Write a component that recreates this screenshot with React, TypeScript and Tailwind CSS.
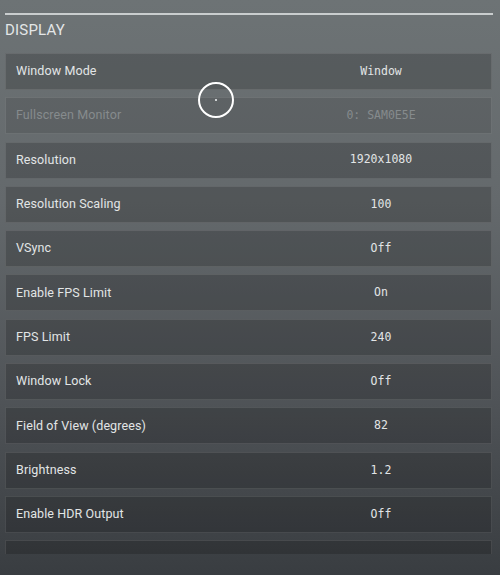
const rows = [
  { label: "Window Mode", value: "Window" },
  { label: "Fullscreen Monitor", value: "0: SAM0E5E", disabled: true },
  { label: "Resolution", value: "1920x1080" },
  { label: "Resolution Scaling", value: "100" },
  { label: "VSync", value: "Off" },
  { label: "Enable FPS Limit", value: "On" },
  { label: "FPS Limit", value: "240" },
  { label: "Window Lock", value: "Off" },
  { label: "Field of View (degrees)", value: "82" },
  { label: "Brightness", value: "1.2" },
  { label: "Enable HDR Output", value: "Off" },
];

export default function App() {
  return (
    <div className="relative w-[500px] h-[575px] overflow-hidden bg-[linear-gradient(180deg,#6d7375_0%,#64696c_35%,#4f5357_70%,#393d41_100%)] font-['Roboto',sans-serif]">
      <div className="pl-[5px] pr-[7px] pt-[13px]">
        <div className="h-[2px] bg-[#c9cdce]" />
        <h2 className="mt-[6px] text-[15px] leading-[18px] tracking-[0.2px] text-[#e3e6e7] uppercase">
          Display
        </h2>
        <div className="mt-[14px] h-[501px] overflow-hidden flex flex-col gap-[7.3px] pr-[1px]">
          {rows.map((row) => (
            <div
              key={row.label}
              className={`shrink-0 h-[37px] grid grid-cols-[265px_1fr] items-center border border-white/10 ${
                row.disabled ? "bg-black/10" : "bg-black/[0.18]"
              }`}
            >
              <span
                className={`pl-[10px] text-[12.5px] tracking-[0.1px] ${
                  row.disabled ? "text-[#868b8d]" : "text-[#e2e5e6]"
                }`}
              >
                {row.label}
              </span>
              <span
                className={`text-center text-[11.5px] font-['DejaVu_Sans_Mono',monospace] ${
                  row.disabled ? "text-[#868b8d]" : "text-[#e2e5e6]"
                }`}
              >
                {row.value}
              </span>
            </div>
          ))}
          <div className="shrink-0 h-[37px] border border-white/10 bg-black/[0.18]" />
        </div>
      </div>

      {/* mouse cursor */}
      <div className="absolute left-[198px] top-[82px] w-[36px] h-[36px] rounded-full border-2 border-white">
        <div className="absolute left-[15px] top-[15px] w-[2px] h-[2px] bg-[#cfd2d3]" />
      </div>
    </div>
  );
}
